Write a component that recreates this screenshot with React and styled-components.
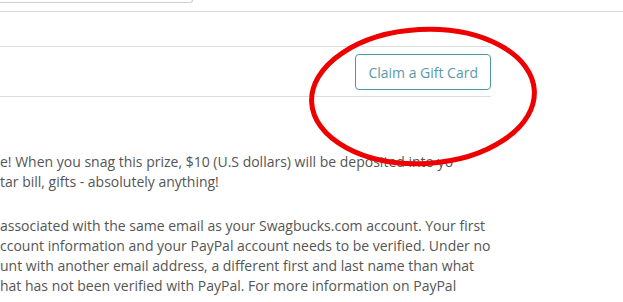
import React from "react";
import styled, { createGlobalStyle } from "styled-components";

const GlobalStyle = createGlobalStyle`
  html, body { margin: 0; padding: 0; background: #fff; overflow: hidden; }
  body { font-family: "Open Sans", "Noto Sans", sans-serif; color: #555; }
`;

const Page = styled.div`
  position: relative;
  width: 623px;
  height: 302px;
  overflow: hidden;
`;

const TopBar = styled.div`
  height: 11px;
  border-bottom: 1px solid #dcdcdc;
`;

const SearchBox = styled.div`
  width: 192px;
  height: 2px;
  border-bottom: 1px solid #cfcfcf;
  border-right: 1px solid #cfcfcf;
  border-bottom-right-radius: 3px;
`;

const Main = styled.div`
  width: 491px;
  padding-top: 34px;
`;

const ActionRow = styled.div`
  display: flex;
  justify-content: flex-end;
  align-items: center;
  height: 49px;
  border-top: 1px solid #dcdcdc;
  border-bottom: 1px solid #dcdcdc;
`;

const OutlineButton = styled.button`
  height: 36px;
  padding: 0 12px;
  margin-top: 1px;
  background: #fff;
  border: 1px solid #4b97a8;
  border-radius: 4px;
  color: #5a99aa;
  font-family: "Open Sans", "Noto Sans", sans-serif;
  font-size: 14px;
  cursor: pointer;
`;

const Description = styled.div`
  padding-top: 55px;
  font-size: 14px;
  line-height: 20px;
  color: #555;
`;

const Paragraph = styled.p`
  margin: 0 0 24px;
  white-space: nowrap;
`;

const Line = styled.span`
  display: block;
`;

const Highlight = styled.svg`
  position: absolute;
  left: 305px;
  top: 22px;
  pointer-events: none;
`;

const para1 = [
  "e! When you snag this prize, $10 (U.S dollars) will be deposited into yo",
  "tar bill, gifts - absolutely anything!",
];

const para2 = [
  " associated with the same email as your Swagbucks.com account. Your first",
  "ccount information and your PayPal account needs to be verified. Under no",
  "unt with another email address, a different first and last name than what",
  "hat has not been verified with PayPal. For more information on PayPal",
];

export default function App() {
  return (
    <Page>
      <GlobalStyle />
      <TopBar>
        <SearchBox />
      </TopBar>
      <Main>
        <ActionRow>
          <OutlineButton>Claim a Gift Card</OutlineButton>
        </ActionRow>
        <Description>
          <Paragraph>
            {para1.map((t, i) => (
              <Line key={i}>{t}</Line>
            ))}
          </Paragraph>
          <Paragraph>
            {para2.map((t, i) => (
              <Line key={i}>{t}</Line>
            ))}
          </Paragraph>
        </Description>
      </Main>
      <Highlight width="240" height="152" viewBox="0 0 240 152">
        <ellipse
          cx="118"
          cy="74.5"
          rx="111.5"
          ry="67"
          fill="none"
          stroke="#ee0000"
          strokeWidth="5"
          transform="rotate(-3 118 74.5)"
        />
      </Highlight>
    </Page>
  );
}
